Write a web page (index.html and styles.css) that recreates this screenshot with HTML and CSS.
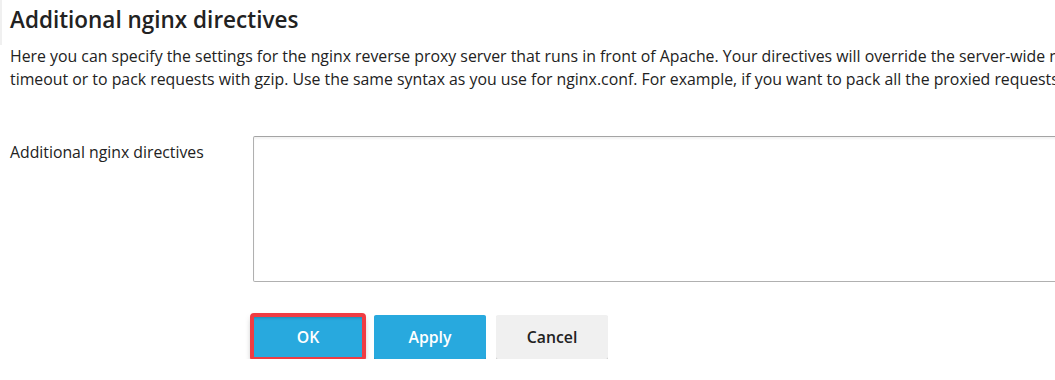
FILE: index.html
```html
<!DOCTYPE html>
<html lang="en">

<head>
    <meta charset="UTF-8">
    <meta name="viewport" content="width=device-width, initial-scale=1.0">
    <title>Additional nginx directives</title>
    <link rel="stylesheet" href="styles.css">
</head>

<body>
    <div class="page">
        <section class="section">
            <h2 class="section-title">Additional nginx directives</h2>
            <p class="section-hint">
                Here you can specify the settings for the nginx reverse proxy server that runs in front of Apache. Your directives will override the server-wide nginx settings. For example, you may want to change the connection<br>
                timeout or to pack requests with gzip. Use the same syntax as you use for nginx.conf. For example, if you want to pack all the proxied requests with gzip, add the line: 'gzip_proxied any;'.
            </p>
        </section>
        <form class="form">
            <div class="form-row">
                <label class="form-label" for="directives">Additional nginx directives</label>
                <div class="form-field">
                    <textarea id="directives" class="textarea"></textarea>
                </div>
            </div>
            <div class="buttons">
                <button type="button" class="btn btn-primary btn-focused">OK</button>
                <button type="button" class="btn btn-primary">Apply</button>
                <button type="button" class="btn">Cancel</button>
            </div>
        </form>
    </div>
</body>

</html>
```

FILE: styles.css
```css
:root {
    --primary-color: #28a9de;
    --text-color: #222;
    --border-color: #b0b0b0;
    --focus-color: #f03c43;
}

html,
body {
    margin: 0;
    overflow: hidden;
}

body {
    font-family: "Open Sans", sans-serif;
    color: var(--text-color);
    background: white;
}

.page {
    width: 1500px;
}

.section-title {
    margin: 0;
    padding: 5px 0 10px 8px;
    border-left: 2px solid #f0f0f0;
    font-size: 22.5px;
    font-weight: 600;
    line-height: 30px;
}

.section-hint {
    margin: 0;
    padding-left: 10px;
    font-size: 15.85px;
    line-height: 23px;
    white-space: nowrap;
}

.form {
    margin-top: 45px;
}

.form-row {
    display: flex;
    padding-left: 10px;
}

.form-label {
    width: 243px;
    font-size: 15.8px;
    line-height: 22px;
    padding-top: 5px;
}

.textarea {
    display: block;
    box-sizing: border-box;
    width: 900px;
    height: 146px;
    margin: 0;
    padding: 4px 6px;
    border: 1px solid var(--border-color);
    border-top-color: #a4a4a4;
    border-radius: 2px;
    box-shadow: inset 0 2px 2px rgba(0, 0, 0, 0.05);
    font-family: inherit;
    resize: none;
}

.buttons {
    display: flex;
    gap: 10px;
    margin-top: 33px;
    padding-left: 252px;
}

.btn {
    width: 112px;
    height: 44px;
    border: none;
    border-radius: 2px;
    background: #f0f0f0;
    box-shadow: 0 1px 0 #c4c4c4;
    color: #222;
    font-family: inherit;
    font-size: 15.8px;
    font-weight: 600;
    cursor: pointer;
}

.btn-primary {
    background: var(--primary-color);
    color: white;
    box-shadow: 0 1px 0 #1c8ab8;
}

.btn-focused {
    outline: 4px solid var(--focus-color);
    outline-offset: -2px;
    box-shadow: inset 0 3px 3px rgba(0, 0, 0, 0.2), 0 3px 6px rgba(0, 0, 0, 0.35);
}
```
